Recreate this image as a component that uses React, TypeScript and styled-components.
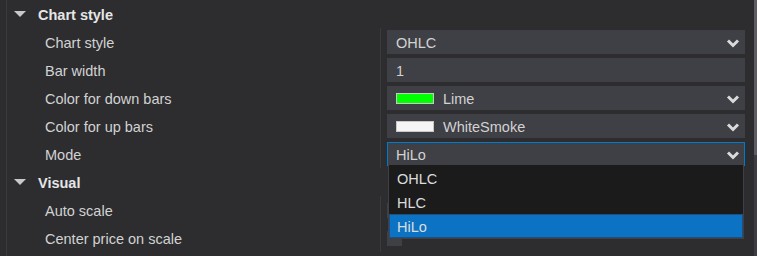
import React from 'react';
import styled, { createGlobalStyle } from 'styled-components';

const GlobalStyle = createGlobalStyle`
  html, body {
    margin: 0;
    padding: 0;
    background: #2d2d30;
  }
  body {
    font-family: "Liberation Sans", Arial, sans-serif;
  }
`;

const Frame = styled.div`
  width: 757px;
  height: 256px;
  display: flex;
  overflow: hidden;
  background: #2d2d30;
  color: #d4d4d4;
  font-size: 14.5px;
`;

const Grid = styled.div`
  flex: 1;
  margin-left: 6px;
  border-left: 1px solid #3a3a3c;
  display: flex;
  flex-direction: column;
`;

const ScrollTrack = styled.div`
  width: 3px;
  background: #3e3e42;
  display: flex;
  flex-direction: column;
`;

const ScrollThumb = styled.div`
  height: 155px;
  background: #5e5e62;
`;

const CategoryRow = styled.div`
  height: 28px;
  display: flex;
  align-items: center;
  flex-shrink: 0;
  padding-top: 1px;
  box-sizing: border-box;
`;

const Caret = styled.span`
  width: 0;
  height: 0;
  margin-left: 7px;
  margin-right: 12px;
  margin-top: -1px;
  border-left: 6px solid transparent;
  border-right: 6px solid transparent;
  border-top: 6px solid #c8c8c8;
`;

const CategoryTitle = styled.span`
  font-weight: bold;
  color: #e6e6e6;
`;

const PropRow = styled.div`
  height: 28px;
  display: grid;
  grid-template-columns: 373px 1fr;
  flex-shrink: 0;
`;

const Label = styled.div`
  display: flex;
  align-items: center;
  padding-left: 38px;
  padding-top: 1px;
  color: #d2d2d2;
`;

const ValueCell = styled.div`
  border-left: 1px solid #3a3a3c;
  padding: 2px 9px 2px 6px;
  display: flex;
  align-items: center;
`;

const Box = styled.div<{ $focused?: boolean }>`
  position: relative;
  flex: 1;
  height: 24px;
  box-sizing: border-box;
  background: #3f3f46;
  border: 1px solid ${p => (p.$focused ? '#007acc' : '#3f3f46')};
  display: flex;
  align-items: center;
  padding: 1px 4px 0 8px;
  color: #d2d2d2;
`;

const BoxText = styled.span`
  flex: 1;
`;

const Swatch = styled.span<{ $color: string }>`
  width: 36px;
  height: 9px;
  background: ${p => p.$color};
  border: 1px solid #c8c8c8;
  margin-right: 9px;
`;

const Checkbox = styled.div`
  align-self: flex-start;
  width: 15px;
  height: 15px;
  background: #3f3f46;
  margin-top: 5px;
`;

const Menu = styled.div`
  position: absolute;
  top: 100%;
  left: 0;
  right: 0;
  padding-top: 1px;
  background: #1b1b1c;
  border: 1px solid #3f3f46;
  border-top: none;
  z-index: 2;
`;

const MenuItem = styled.div<{ $active?: boolean }>`
  height: 24px;
  box-sizing: border-box;
  display: flex;
  align-items: center;
  padding: 2px 0 0 7px;
  color: #dcdcdc;
  background: ${p => (p.$active ? '#0c73c4' : 'transparent')};
  border: 1px solid ${p => (p.$active ? '#1f4f7a' : 'transparent')};
`;

const Chevron = () => (
  <svg width="14" height="10" viewBox="0 0 14 10">
    <path d="M2 2.5 L7 7.5 L12 2.5" fill="none" stroke="#dadada" strokeWidth="3" />
  </svg>
);

const Select: React.FC<{ value: string; swatch?: string; focused?: boolean; children?: React.ReactNode }> = ({
  value,
  swatch,
  focused,
  children,
}) => (
  <Box $focused={focused}>
    {swatch && <Swatch $color={swatch} />}
    <BoxText>{value}</BoxText>
    <Chevron />
    {children}
  </Box>
);

export default function App() {
  const modes = ['OHLC', 'HLC', 'HiLo'];

  return (
    <>
      <GlobalStyle />
      <Frame>
        <Grid>
          <CategoryRow>
            <Caret />
            <CategoryTitle>Chart style</CategoryTitle>
          </CategoryRow>
          <PropRow>
            <Label>Chart style</Label>
            <ValueCell>
              <Select value="OHLC" />
            </ValueCell>
          </PropRow>
          <PropRow>
            <Label>Bar width</Label>
            <ValueCell>
              <Box>
                <BoxText>1</BoxText>
              </Box>
            </ValueCell>
          </PropRow>
          <PropRow>
            <Label>Color for down bars</Label>
            <ValueCell>
              <Select value="Lime" swatch="#00ff00" />
            </ValueCell>
          </PropRow>
          <PropRow>
            <Label>Color for up bars</Label>
            <ValueCell>
              <Select value="WhiteSmoke" swatch="#f5f5f5" />
            </ValueCell>
          </PropRow>
          <PropRow>
            <Label>Mode</Label>
            <ValueCell>
              <Select value="HiLo" focused>
                <Menu>
                  {modes.map(m => (
                    <MenuItem key={m} $active={m === 'HiLo'}>
                      {m}
                    </MenuItem>
                  ))}
                </Menu>
              </Select>
            </ValueCell>
          </PropRow>
          <CategoryRow>
            <Caret />
            <CategoryTitle>Visual</CategoryTitle>
          </CategoryRow>
          <PropRow>
            <Label>Auto scale</Label>
            <ValueCell>
              <Checkbox />
            </ValueCell>
          </PropRow>
          <PropRow>
            <Label>Center price on scale</Label>
            <ValueCell>
              <Checkbox />
            </ValueCell>
          </PropRow>
        </Grid>
        <ScrollTrack>
          <ScrollThumb />
        </ScrollTrack>
      </Frame>
    </>
  );
}
